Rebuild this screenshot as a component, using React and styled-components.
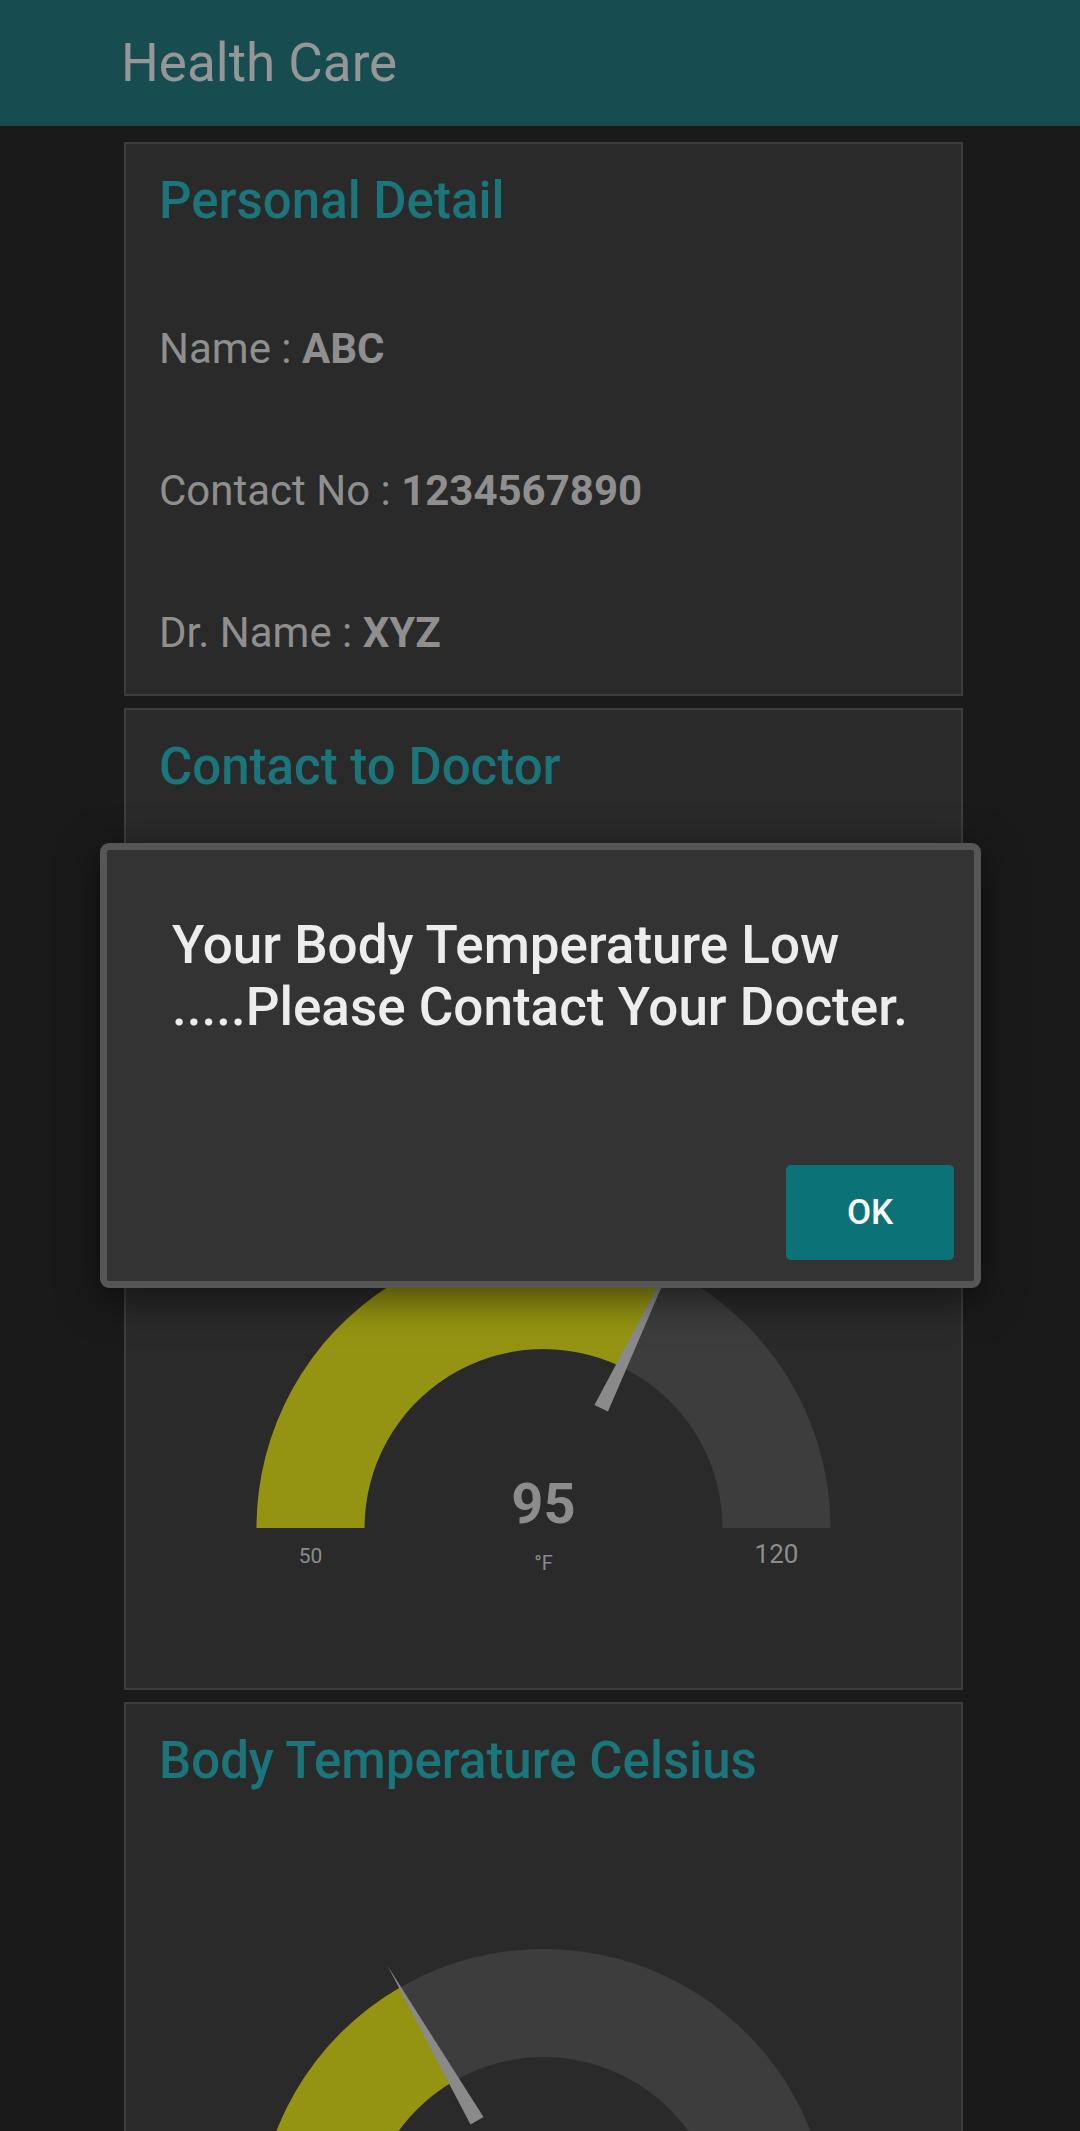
import styled, { createGlobalStyle } from 'styled-components';

const GlobalStyle = createGlobalStyle`
  body {
    margin: 0;
    background-color: #1a1a1a;
    font-family: Roboto, "Liberation Sans", sans-serif;
  }
`;

const Header = styled.header`
  height: 126px;
  background-color: #174d50;
  display: flex;
  align-items: center;
  padding-left: 121px;
  box-sizing: border-box;
`;

const HeaderTitle = styled.h1`
  margin: 0;
  font-size: 53px;
  font-weight: 400;
  color: #969696;
`;

const Main = styled.main`
  padding: 16px 0 40px 124px;
  display: flex;
  flex-direction: column;
  gap: 12px;
`;

const Card = styled.section`
  width: 839px;
  box-sizing: border-box;
  background-color: #2a2a2a;
  border: 2px solid #3d3d3d;
  padding: 27px 33px ${({ $flush }) => ($flush ? '0' : '37px')};
`;

const CardTitle = styled.h2`
  margin: 0;
  font-size: 51px;
  line-height: 60px;
  font-weight: 500;
  color: #1a767a;
`;

const InfoRow = styled.p`
  margin: 94px 0 0;
  font-size: 42px;
  line-height: 48px;
  color: #8f8f8f;

  b {
    font-weight: 700;
  }
`;

const CallButton = styled.button`
  margin-top: 50px;
  height: 96px;
  padding: 0 40px;
  border: none;
  border-radius: 5px;
  background-color: #0b7377;
  color: #fff;
  font-family: inherit;
  font-size: 36px;
  font-weight: 500;
`;

const GaugeSvg = styled.svg`
  display: block;
  width: 769px;
  height: 605px;
`;

const Dialog = styled.div`
  position: absolute;
  left: 100px;
  top: 843px;
  width: 881px;
  height: 445px;
  box-sizing: border-box;
  background-color: #333333;
  border: 7px solid #565656;
  border-radius: 9px;
  box-shadow: 0 10px 40px rgba(0, 0, 0, 0.55);
  padding: 64px 20px 21px 65px;
  display: flex;
  flex-direction: column;
  justify-content: space-between;
`;

const DialogText = styled.p`
  margin: 0;
  font-size: 53px;
  line-height: 62px;
  font-weight: 500;
  color: #ededed;
`;

const OkButton = styled.button`
  align-self: flex-end;
  width: 168px;
  height: 95px;
  border: none;
  border-radius: 5px;
  background-color: #0b7377;
  color: #ffffff;
  font-family: inherit;
  font-size: 35px;
  font-weight: 500;
`;

const CX = 384.5;
const CY = 445;
const R = 287;
const RI = 179;

const pt = (rad, ang) => [CX + rad * Math.cos(ang), CY - rad * Math.sin(ang)];

const Gauge = ({ value, min, max, unit, minSize = 21, maxSize = 26 }) => {
  const f = Math.min(1, Math.max(0, (value - min) / (max - min)));
  const ang = Math.PI * (1 - f);
  const [ox, oy] = pt(R, ang);
  const [ix, iy] = pt(RI, ang);
  const bg = `M ${CX - R} ${CY} A ${R} ${R} 0 0 1 ${CX + R} ${CY} L ${CX + RI} ${CY} A ${RI} ${RI} 0 0 0 ${CX - RI} ${CY} Z`;
  const fill = `M ${CX - R} ${CY} A ${R} ${R} 0 0 1 ${ox} ${oy} L ${ix} ${iy} A ${RI} ${RI} 0 0 0 ${CX - RI} ${CY} Z`;
  const [bx, by] = pt(133, ang);
  const [tx, ty] = pt(312, ang);
  const px = Math.sin(ang) * 7.5;
  const py = Math.cos(ang) * 7.5;
  const needle = `${bx + px},${by + py} ${bx - px},${by - py} ${tx},${ty}`;

  return (
    <GaugeSvg viewBox="0 0 769 605">
      <path d={bg} fill="#3d3d3d" />
      <path d={fill} fill="#959412" />
      <polygon points={needle} fill="#8a8a8a" />
      <g fontFamily="Roboto, sans-serif" fill="#8c8c8c" textAnchor="middle">
        <text x={CX} y={CY - 5} fontSize="56" fontWeight="700">{value}</text>
        <text x={CX} y={CY + 42} fontSize="20">{unit}</text>
        <text x={CX - (R + RI) / 2} y={CY + 35} fontSize={minSize}>{min}</text>
        <text x={CX + (R + RI) / 2} y={CY + 35} fontSize={maxSize}>{max}</text>
      </g>
    </GaugeSvg>
  );
};

const App = () => {
  return (
    <>
      <GlobalStyle />
      <Header>
        <HeaderTitle>Health Care</HeaderTitle>
      </Header>
      <Main>
        <Card>
          <CardTitle>Personal Detail</CardTitle>
          <InfoRow>Name : <b>ABC</b></InfoRow>
          <InfoRow>Contact No : <b>1234567890</b></InfoRow>
          <InfoRow>Dr. Name : <b>XYZ</b></InfoRow>
        </Card>
        <Card>
          <CardTitle>Contact to Doctor</CardTitle>
          <CallButton>CALL</CallButton>
        </Card>
        <Card $flush>
          <CardTitle>Body Temperature Fahrenheit</CardTitle>
          <Gauge value={95} min={50} max={120} unit="°F" />
        </Card>
        <Card $flush>
          <CardTitle>Body Temperature Celsius</CardTitle>
          <Gauge value={35} min={30} max={45} unit="°C" />
        </Card>
      </Main>
      <Dialog>
        <DialogText>
          Your Body Temperature Low
          <br />
          .....Please Contact Your Docter.
        </DialogText>
        <OkButton>OK</OkButton>
      </Dialog>
    </>
  );
};

export default App;
